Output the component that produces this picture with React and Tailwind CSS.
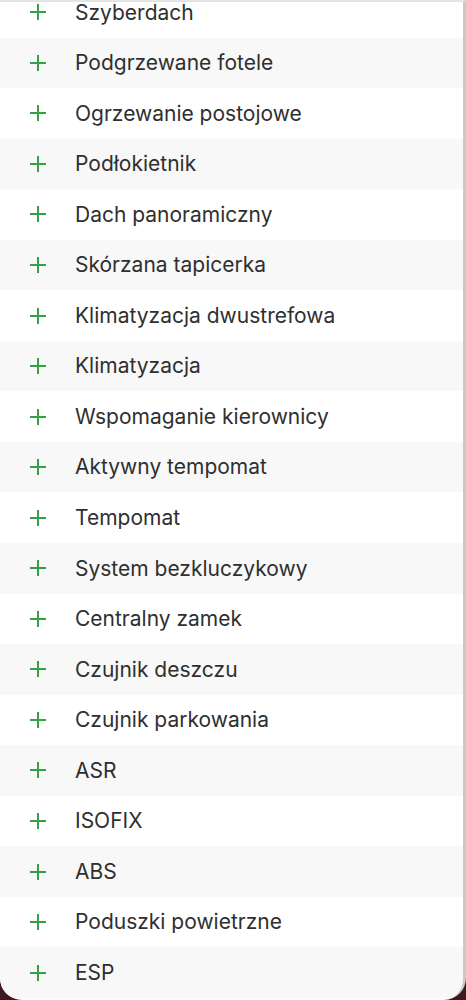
const features = [
	'Szyberdach',
	'Podgrzewane fotele',
	'Ogrzewanie postojowe',
	'Podłokietnik',
	'Dach panoramiczny',
	'Skórzana tapicerka',
	'Klimatyzacja dwustrefowa',
	'Klimatyzacja',
	'Wspomaganie kierownicy',
	'Aktywny tempomat',
	'Tempomat',
	'System bezkluczykowy',
	'Centralny zamek',
	'Czujnik deszczu',
	'Czujnik parkowania',
	'ASR',
	'ISOFIX',
	'ABS',
	'Poduszki powietrzne',
	'ESP',
]

const PlusIcon = () => (
	<svg width="18" height="18" viewBox="0 0 18 18" className="shrink-0">
		<path d="M9 1v16M1 9h16" stroke="#34a047" strokeWidth="2" strokeLinecap="butt" />
	</svg>
)

export default function App() {
	return (
		<div className="w-[466px] h-[1000px] overflow-hidden bg-[#3a1a1a]">
			<div className="h-full bg-white rounded-b-[22px] overflow-hidden border-t-2 border-t-[#e4e4e4] border-r-[3px] border-r-[#c9c9c9] relative">
				<ul className="-mt-[15px] font-['Inter','Roboto',sans-serif] text-[21px] font-normal text-[#2f2f2f]">
					{features.map((name, i) => (
						<li
							key={name}
							className={`h-[50.55px] flex items-center ${i % 2 === 1 ? 'bg-[#f8f8f8]' : 'bg-white'}`}
						>
							<div className="w-[75px] pl-[29px] flex items-center">
								<PlusIcon />
							</div>
							<span>{name}</span>
						</li>
					))}
				</ul>
			</div>
		</div>
	)
}
